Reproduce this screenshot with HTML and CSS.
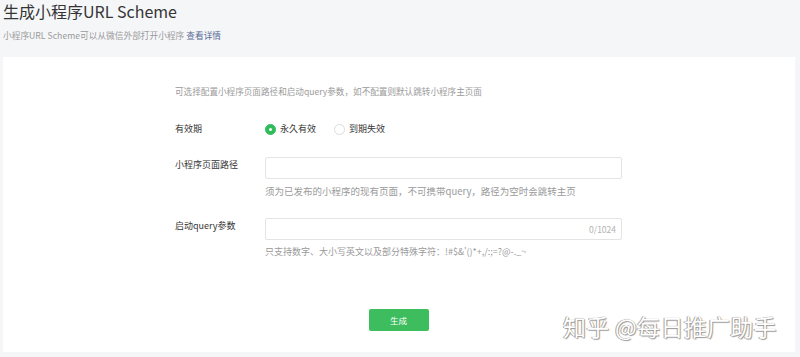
FILE: index.html
```html
<!DOCTYPE html>
<html lang="zh-CN">
<head>
<meta charset="utf-8">
<title>生成小程序URL Scheme</title>
<link rel="stylesheet" href="styles.css">
</head>
<body>
<div class="page">
  <header class="head">
    <h1 class="title">生成小程序URL Scheme</h1>
    <p class="sub">小程序URL Scheme可以从微信外部打开小程序 <a class="link" href="#">查看详情</a></p>
  </header>
  <section class="card">
    <div class="form">
      <p class="desc">可选择配置小程序页面路径和启动query参数，如不配置则默认跳转小程序主页面</p>
      <div class="row row-radio">
        <div class="label">有效期</div>
        <div class="ctrl radios">
          <span class="radio"><span class="dot on"></span>永久有效</span>
          <span class="radio"><span class="dot"></span>到期失效</span>
        </div>
      </div>
      <div class="row row-input">
        <div class="label">小程序页面路径</div>
        <div class="ctrl">
          <div class="input"></div>
          <p class="hint hint-wide">须为已发布的小程序的现有页面，不可携带query，路径为空时会跳转主页</p>
        </div>
      </div>
      <div class="row row-input">
        <div class="label">启动query参数</div>
        <div class="ctrl">
          <div class="input"><span class="count">0/1024</span></div>
          <p class="hint">只支持数字、大小写英文以及部分特殊字符：!#$&amp;'()*+,/:;=?@-._~</p>
        </div>
      </div>
      <div class="actions"><button class="btn">生成</button></div>
    </div>
    <div class="watermark">知乎 @每日推广助手</div>
  </section>
</div>
</body>
</html>
```
FILE: styles.css
```css
* { box-sizing: border-box; }
html, body { margin: 0; padding: 0; }
body {
  background: #f5f6f8;
  font-family: "Noto Sans CJK SC", "Noto Sans", sans-serif;
  color: #353535;
  width: 800px;
  height: 357px;
  overflow: hidden;
}
.page { padding: 0 5px 5px 3px; }
.head { height: 57px; padding-top: 1px; }
.title {
  margin: 0;
  font-size: 16px;
  line-height: 20px;
  font-weight: 400;
  color: #353535;
}
.sub {
  margin: 8px 0 0;
  font-size: 8.7px;
  line-height: 14px;
  color: #9a9a9a;
}
.link { color: #576b95; text-decoration: none; }
.card {
  position: relative;
  background: #fff;
  height: 295px;
  padding: 27px 0 0 172px;
}
.form { width: 447px; }
.desc {
  margin: 0;
  font-size: 8.6px;
  line-height: 14px;
  color: #9a9a9a;
}
.row { display: flex; }
.label {
  width: 90px;
  flex: none;
  font-size: 9px;
  color: #353535;
}
.ctrl { flex: 1; }
.row-radio { margin-top: 24px; height: 14px; line-height: 14px; }
.row-radio .label { line-height: 14px; }
.radios { display: flex; font-size: 9px; }
.radio { display: inline-flex; align-items: center; width: 69px; }
.dot {
  width: 11px; height: 11px; border-radius: 50%;
  border: 1px solid #dcdcdc;
  margin-right: 4px;
  position: relative;
}
.dot.on { background: #2fbd5b; border-color: #2fbd5b; }
.dot.on::after {
  content: ""; position: absolute; left: 3px; top: 3px;
  width: 3px; height: 3px; border-radius: 50%; background: #fff;
}
.row-input { margin-top: 21px; }
.row-input .label { line-height: 14px; padding-top: 1px; }
.row-input + .row-input { margin-top: 20px; }
.input {
  height: 22px;
  border: 1px solid #e4e4e4;
  border-radius: 2px;
  display: flex;
  justify-content: flex-end;
  align-items: center;
  padding-right: 5px;
}
.count { font-size: 8.5px; color: #b2b2b2; }
.hint {
  margin: 5px 0 0;
  font-size: 9px;
  line-height: 14px;
  color: #9a9a9a;
}
.hint-wide { font-size: 9.5px; }
.actions { display: flex; justify-content: center; margin-top: 50px; }
.btn {
  width: 60px; height: 22px;
  background: #3dbd5d;
  border: 0; border-radius: 2px;
  color: #fff;
  font-family: inherit;
  font-size: 8.5px;
  padding: 0;
}
.watermark {
  position: absolute;
  left: 560px; top: 255px;
  font-size: 23px;
  line-height: 28px;
  color: #fff;
  letter-spacing: 0.3px;
  text-shadow: 0 0 1px #8a8a8a, 1px 1px 1px #9a9a9a, -1px 0 0 #b0b0b0;
}
```
